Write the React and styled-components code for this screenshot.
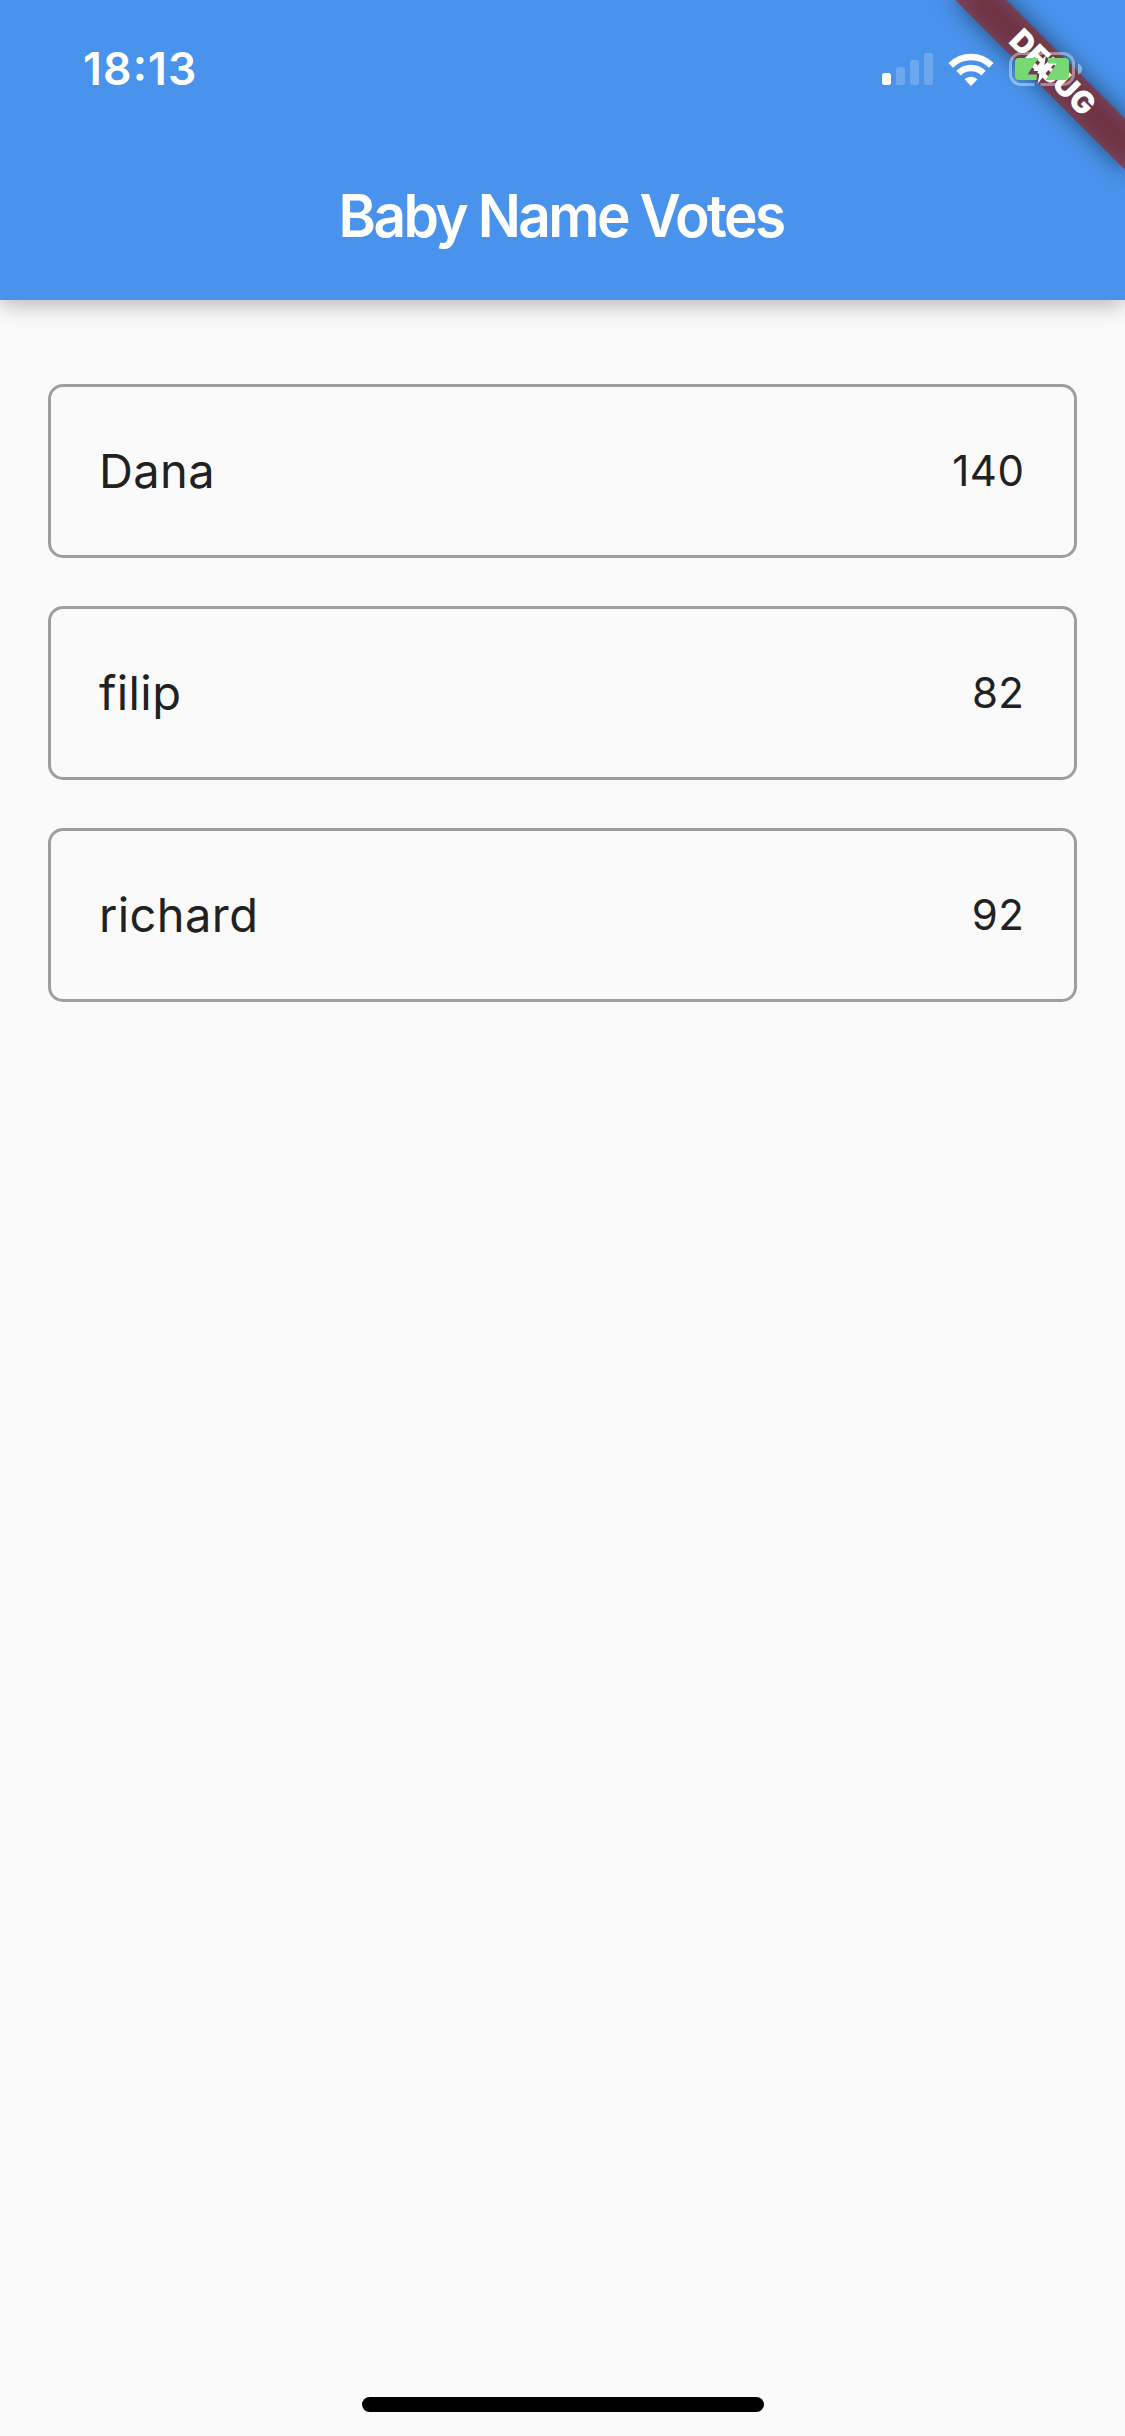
import React from "react";
import styled, { createGlobalStyle } from "styled-components";

const GlobalStyle = createGlobalStyle`
  * { box-sizing: border-box; }
  body { margin: 0; background: #fafafa; }
`;

const Screen = styled.div`
  position: relative;
  display: flex;
  flex-direction: column;
  width: 1125px;
  height: 2436px;
  overflow: hidden;
  background: #fafafa;
  color: #212121;
  font-family: Inter, "Liberation Sans", sans-serif;
`;

const Header = styled.header`
  display: flex;
  flex-direction: column;
  flex: none;
  height: 300px;
  background: #4993ec;
  color: #fff;
  box-shadow: 0 4px 22px rgba(0, 0, 0, 0.29);
`;

const StatusBar = styled.div`
  display: flex;
  align-items: center;
  justify-content: space-between;
  height: 132px;
  padding: 6px 43px 0 83px;
`;

const Clock = styled.time`
  font-size: 44.5px;
  font-weight: 600;
  line-height: 54px;
  letter-spacing: 1.2px;
  font-feature-settings: "calt" 1, "case" 1;
`;

const StatusIcons = styled.div`
  position: relative;
  z-index: 2;
  display: flex;
  align-items: center;
  gap: 15px;
`;

const Glyph = styled.svg`
  display: block;
`;

const Title = styled.h1`
  display: flex;
  align-items: center;
  justify-content: center;
  height: 166px;
  margin: 0;
  padding-right: 3px;
  font-size: 59px;
  font-weight: 560;
  letter-spacing: -2.7px;
  transform: scaleX(0.963);
`;

const VoteList = styled.ul`
  display: flex;
  flex-direction: column;
  flex: 1;
  gap: 48px;
  margin: 0;
  padding: 84px 48px 0;
  list-style: none;
`;

const VoteCard = styled.li`
  display: flex;
  align-items: center;
  justify-content: space-between;
  height: 174px;
  padding: 0 49.5px 0 48px;
  border: 3px solid #9e9e9e;
  border-radius: 15px;
`;

const Name = styled.span`
  font-size: 47px;
  font-weight: 380;
  line-height: 60px;
  letter-spacing: 0.4px;
`;

const Count = styled.span`
  font-size: 42px;
  font-weight: 380;
  line-height: 54px;
  letter-spacing: 0.5px;
`;

const HomeIndicator = styled.div`
  flex: none;
  align-self: center;
  width: 402px;
  height: 15px;
  margin-bottom: 24px;
  border-radius: 8px;
  background: #000;
`;

const DebugBanner = styled.div`
  position: absolute;
  z-index: 1;
  top: 84px;
  right: -120px;
  width: 240px;
  height: 36px;
  transform: rotate(45deg);
  transform-origin: 120px -84px;
  color: #fff;
  font-size: 30.6px;
  font-weight: 900;
  line-height: 36px;
  text-align: center;

  &::before,
  &::after {
    content: "";
    position: absolute;
    inset: 0;
    z-index: -1;
  }
  &::before {
    background: rgba(0, 0, 0, 0.5);
    filter: blur(12px);
  }
  &::after {
    background: rgba(152, 35, 32, 0.63);
  }
`;

const SignalIcon = () => (
  <Glyph width="51" height="33" viewBox="0 0 51 33" fill="#fff">
    <rect y="20" width="9" height="12" rx="2.5" />
    <g opacity="0.2">
      <rect x="14" y="14" width="9" height="18" rx="2.5" />
      <rect x="28" y="7" width="9" height="25" rx="2.5" />
      <rect x="42" y="0" width="9" height="32" rx="2.5" />
    </g>
  </Glyph>
);

const WifiIcon = () => (
  <Glyph width="46" height="33" viewBox="0 0 46 33" fill="none" stroke="#fff">
    <path d="M2.7 12.3C14.2 1.2 31.8 1.2 43.3 12.3" strokeWidth="6.5" />
    <path d="M10.5 20.2C17.5 13.4 28.5 13.4 35.5 20.2" strokeWidth="6.5" />
    <path d="M16.5 26.3C20.2 22.8 25.8 22.8 29.5 26.3L23 33Z" fill="#fff" stroke="none" />
  </Glyph>
);

const BatteryIcon = () => (
  <Glyph width="73" height="34" viewBox="0 0 73 34">
    <path
      d="M25.5 32.5H12A10.5 10.5 0 0 1 1.5 22V12A10.5 10.5 0 0 1 12 1.5H34M40 1.5H54A10.5 10.5 0 0 1 64.5 12V22A10.5 10.5 0 0 1 54 32.5H31.5"
      fill="none"
      stroke="#fff"
      strokeOpacity="0.4"
      strokeWidth="3"
    />
    <path d="M69 11.5C71.5 12.5 73 14.8 73 17C73 19.5 71.5 21.8 69 22.8Z" fill="#fff" fillOpacity="0.45" />
    <path d="M29.5 6H10Q6 6 6 10V24Q6 28 10 28H27.5L28 22.5H18.5Z" fill="#78d873" />
    <path d="M36.5 28H56Q60 28 60 24V10Q60 6 56 6H39L38.5 11.5H47.5Z" fill="#78d873" />
    <path d="M37 3L24.5 19H31L28.5 32L41.5 15H35Z" fill="#fff" />
  </Glyph>
);

const votes = [
  { name: "Dana", count: 140 },
  { name: "filip", count: 82 },
  { name: "richard", count: 92 },
];

export default function App() {
  return (
    <Screen>
      <GlobalStyle />
      <Header>
        <StatusBar>
          <Clock>18:13</Clock>
          <StatusIcons>
            <SignalIcon />
            <WifiIcon />
            <BatteryIcon />
          </StatusIcons>
        </StatusBar>
        <Title>Baby Name Votes</Title>
      </Header>
      <VoteList>
        {votes.map((vote) => (
          <VoteCard key={vote.name}>
            <Name>{vote.name}</Name>
            <Count>{vote.count}</Count>
          </VoteCard>
        ))}
      </VoteList>
      <HomeIndicator />
      <DebugBanner>DEBUG</DebugBanner>
    </Screen>
  );
}
